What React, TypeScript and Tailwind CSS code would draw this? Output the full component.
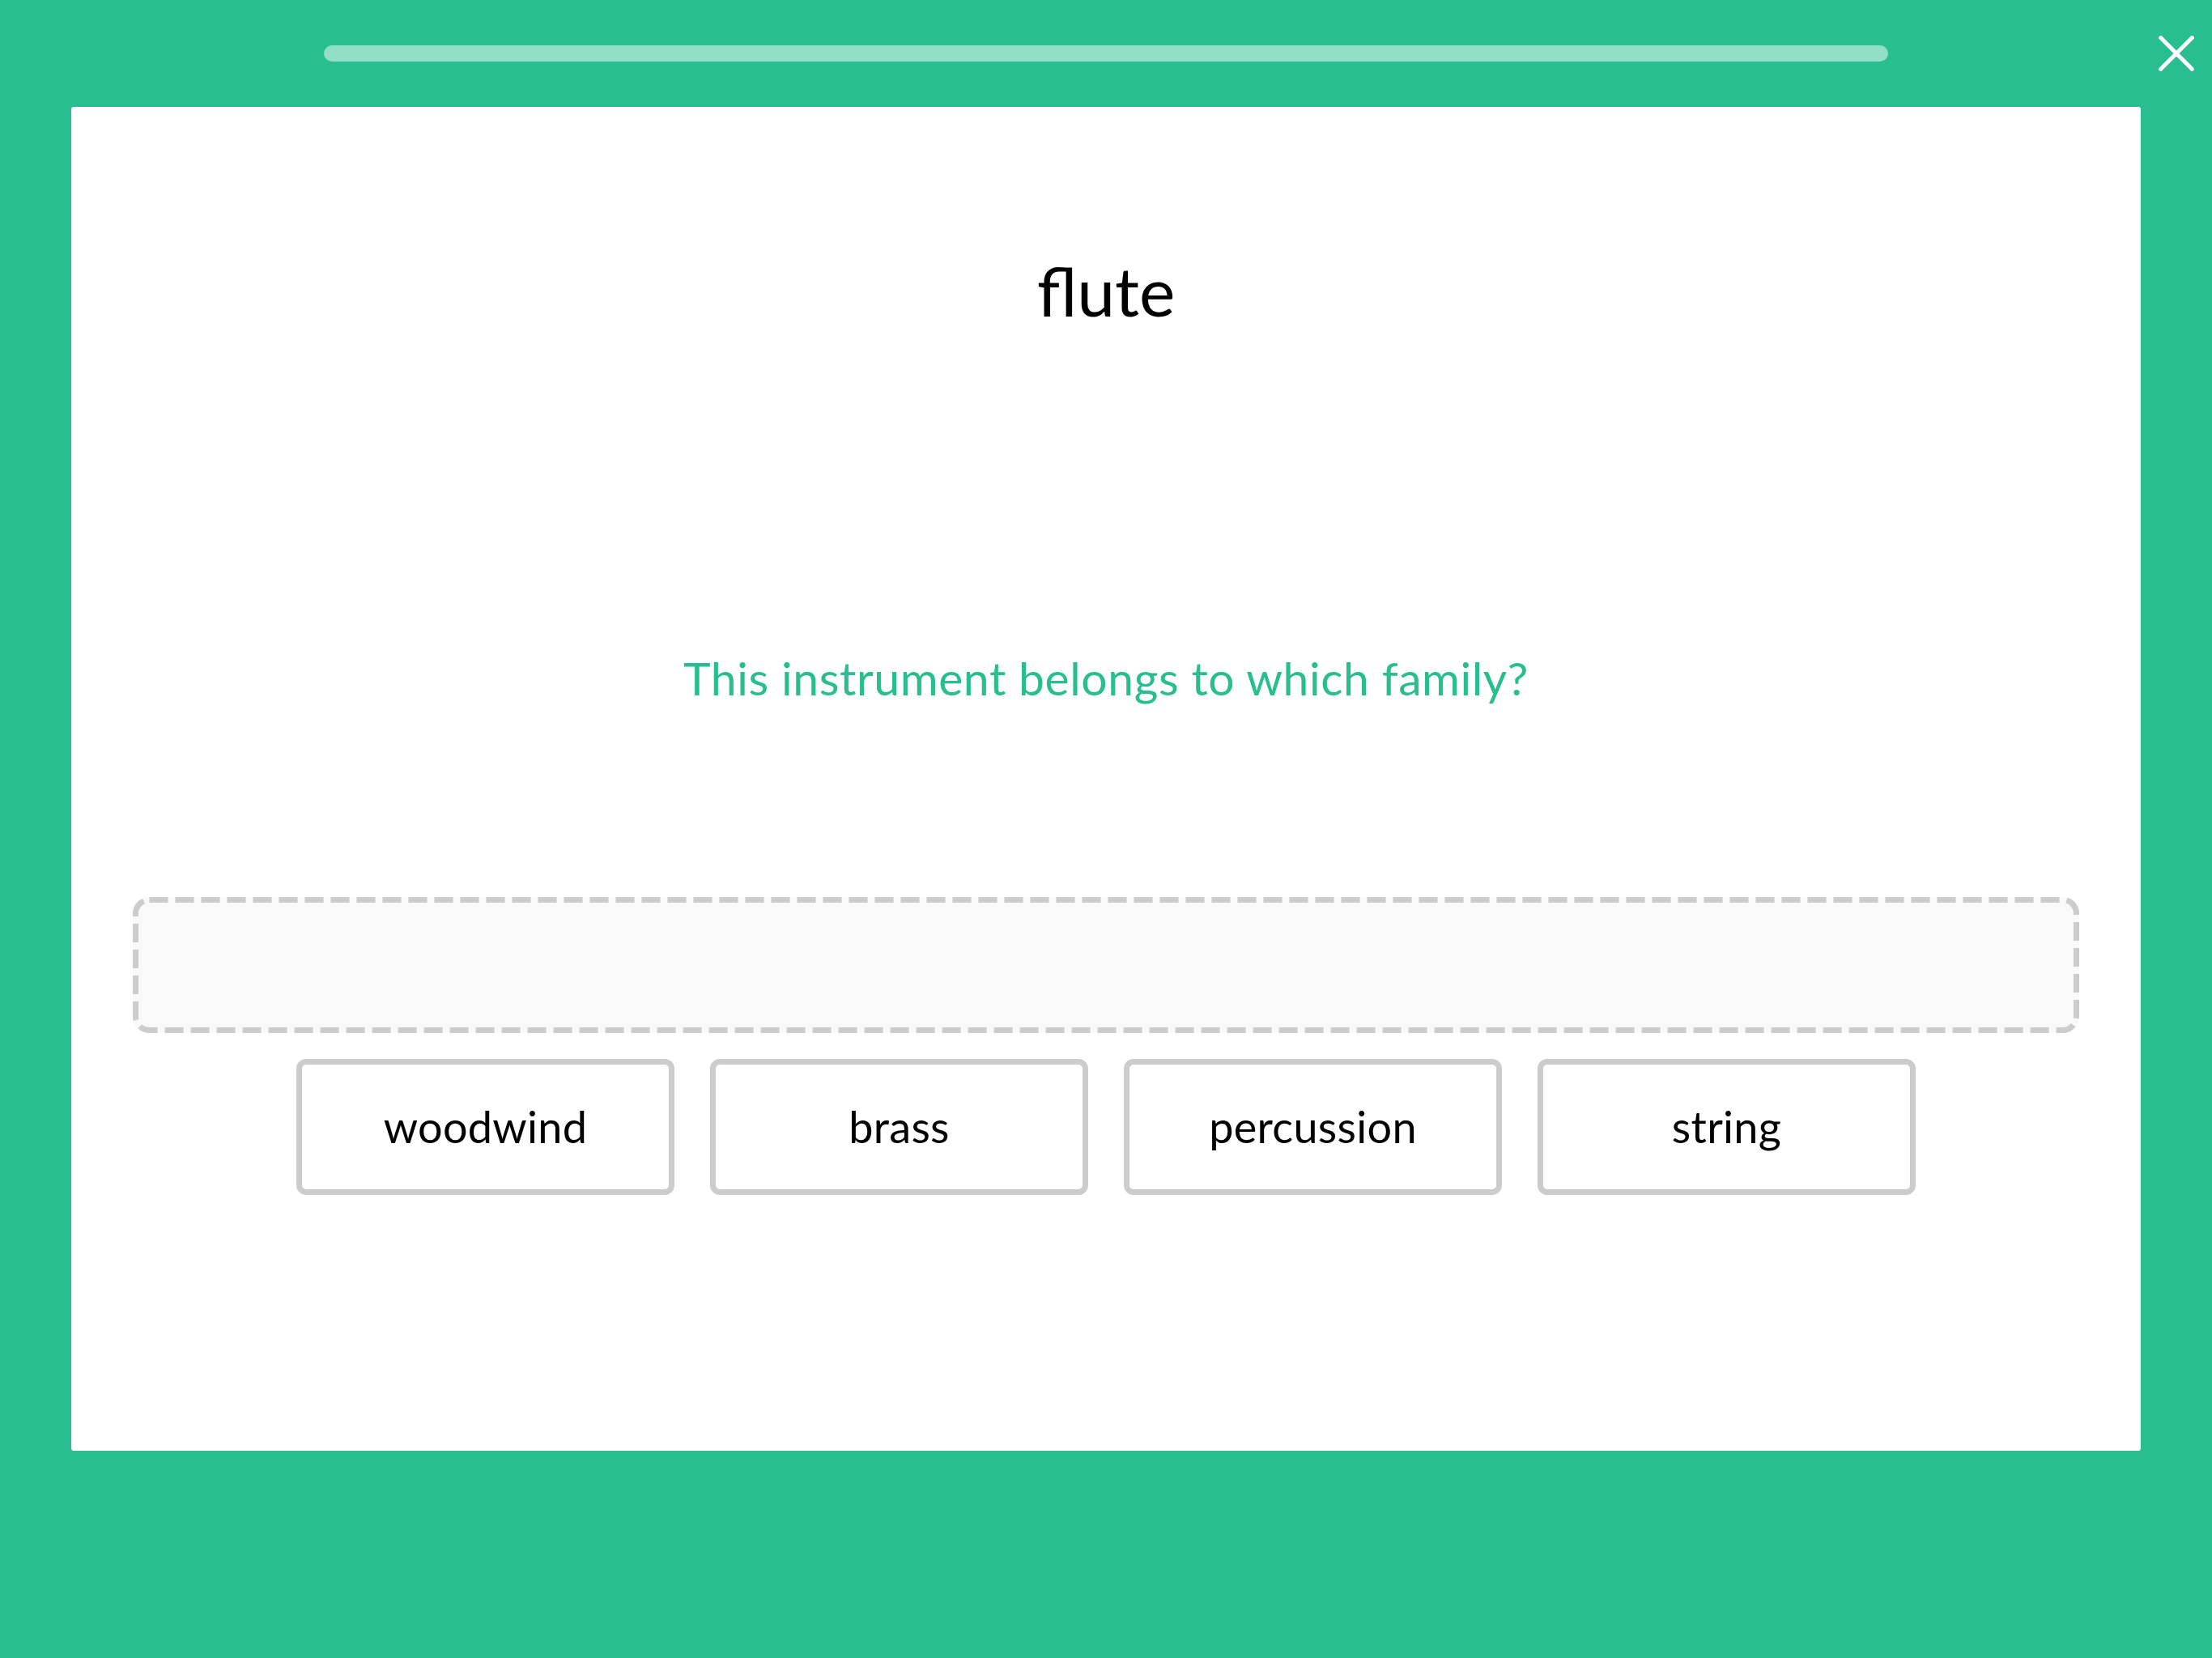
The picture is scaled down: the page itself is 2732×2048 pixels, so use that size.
import React from "react";

// ─── Data ────────────────────────────────────────────────────────────────────
const CHOICES = ["woodwind", "brass", "percussion", "string"];

// ─── Close icon ──────────────────────────────────────────────────────────────
function CloseIcon() {
  return (
    <svg width="44" height="44" viewBox="0 0 44 44" fill="none">
      <line x1="1" y1="1" x2="43" y2="43" stroke="white" strokeWidth="5" />
      <line x1="43" y1="1" x2="1" y2="43" stroke="white" strokeWidth="5" />
    </svg>
  );
}

// ─── Drop zone ───────────────────────────────────────────────────────────────
function DropZone() {
  return (
    <div className="relative mt-[242px] w-[2404px] h-[168px] bg-[#f9f9f9] rounded-[20px]">
      {/* dashed outline */}
      <svg className="absolute inset-0" width="2404" height="168" fill="none">
        <rect
          x="3.5"
          y="3.5"
          width="2397"
          height="161"
          rx="17"
          stroke="#cccccc"
          strokeWidth="7"
          strokeDasharray="23 9"
        />
      </svg>
    </div>
  );
}

// ─── Answer choice ───────────────────────────────────────────────────────────
function Choice({ label }: { label: string }) {
  return (
    <button className="w-[467px] h-[168px] bg-white border-[7px] border-[#cccccc] rounded-[12px] flex items-center justify-center text-[54px] leading-none tracking-[0.3px] text-black">
      {label}
    </button>
  );
}

export default function App() {
  return (
    <div
      className="w-[2732px] h-[2048px] bg-[#28be8f] flex flex-col"
      style={{ fontFamily: "Lato, 'Noto Sans', sans-serif" }}
    >
      {/* Header: progress + close */}
      <div className="relative h-[132px] flex justify-center pt-[56px]">
        <div className="w-[1932px] h-[20px] rounded-full bg-[#93dfc6]" />
        <button className="absolute left-[2666px] top-[44px]">
          <CloseIcon />
        </button>
      </div>

      {/* Question card */}
      <div className="mx-[88px] h-[1660px] bg-white rounded-[3px] flex flex-col items-center pt-[185px]">
        <h1 className="text-[84px] leading-none text-black">flute</h1>
        <p className="mt-[408px] text-[57px] leading-none tracking-[0.6px] text-[#28be8f]">
          This instrument belongs to which family?
        </p>

        <DropZone />

        {/* Choices */}
        <div className="mt-[32px] flex gap-[44px]">
          {CHOICES.map((c) => (
            <Choice key={c} label={c} />
          ))}
        </div>
      </div>
    </div>
  );
}
